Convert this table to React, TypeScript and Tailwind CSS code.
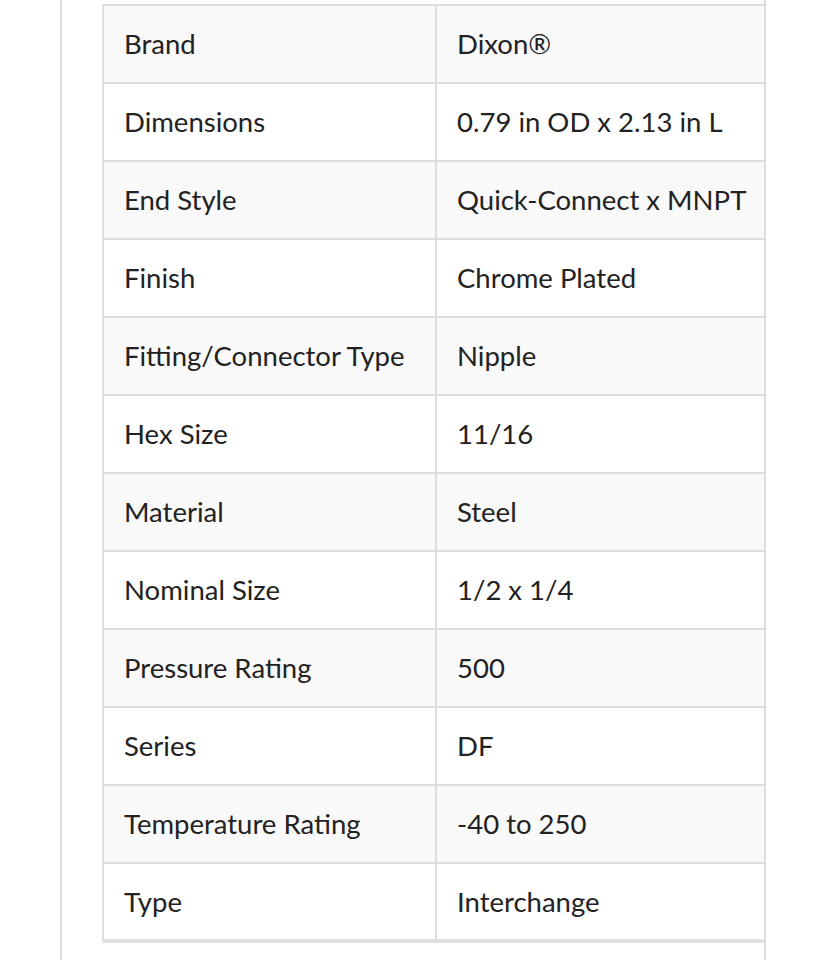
const rows: [string, string][] = [
  ["Brand", "Dixon®"],
  ["Dimensions", "0.79 in OD x 2.13 in L"],
  ["End Style", "Quick-Connect x MNPT"],
  ["Finish", "Chrome Plated"],
  ["Fitting/Connector Type", "Nipple"],
  ["Hex Size", "11/16"],
  ["Material", "Steel"],
  ["Nominal Size", "1/2 x 1/4"],
  ["Pressure Rating", "500"],
  ["Series", "DF"],
  ["Temperature Rating", "-40 to 250"],
  ["Type", "Interchange"],
];

export default function App() {
  return (
    <div className="min-h-[960px] bg-white">
      <div
        className="ml-[60px] w-[706px] min-h-[960px] overflow-hidden border-x-2 border-[#dcdcdc] pl-[40px] pt-[4px]"
        style={{ fontFamily: "Lato, 'Noto Sans', sans-serif" }}
      >
        <table className="w-[700px] border-collapse border-b-4 border-[#e0e0e0] text-[27.5px] text-[#222]">
          <tbody>
            {rows.map(([label, value], i) => (
              <tr key={label} className={i % 2 === 0 ? "bg-[#f9f9f9]" : "bg-white"}>
                <td className="h-[78px] w-[333px] border-2 border-[#dedede] pl-[20px] align-middle leading-none">
                  {label}
                </td>
                <td className="h-[78px] border-2 border-[#dedede] pl-[20px] align-middle leading-none">
                  {value}
                </td>
              </tr>
            ))}
          </tbody>
        </table>
      </div>
    </div>
  );
}
